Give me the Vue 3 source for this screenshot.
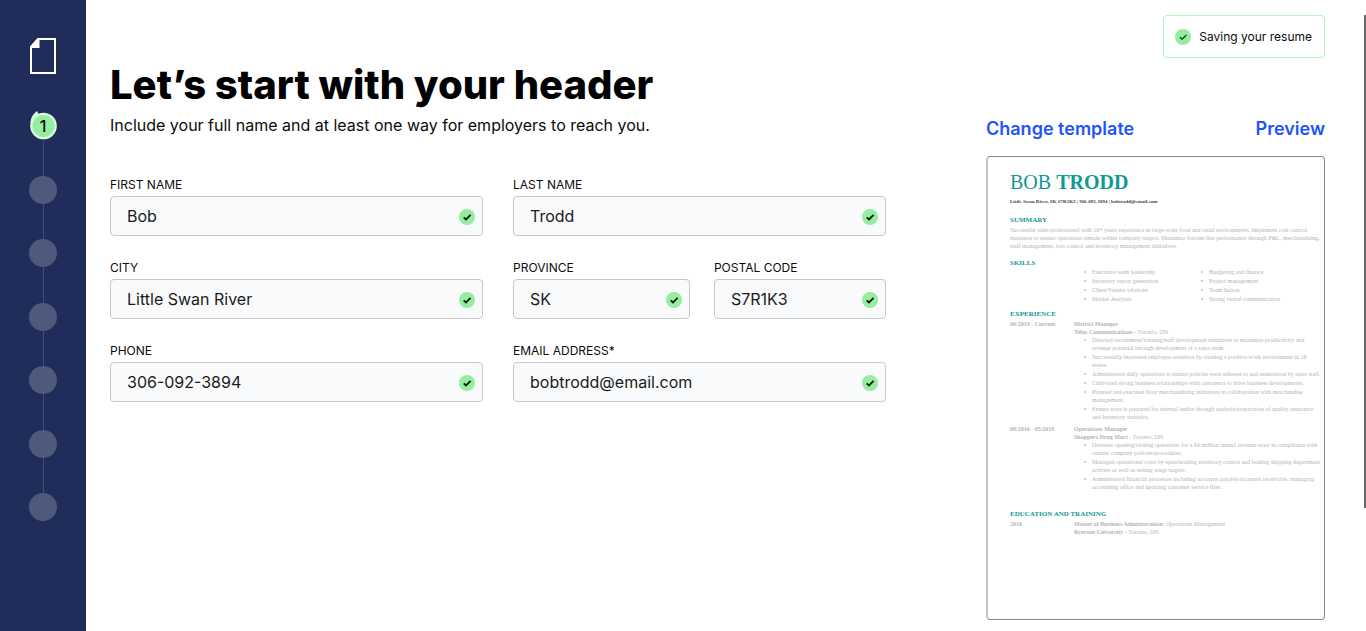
<script setup>
import { reactive } from 'vue'

const fields = reactive([
  { id: 'first-name', label: 'FIRST NAME', value: 'Bob', type: 'text', size: 'half' },
  { id: 'last-name', label: 'LAST NAME', value: 'Trodd', type: 'text', size: 'half' },
  { id: 'city', label: 'CITY', value: 'Little Swan River', type: 'text', size: 'half' },
  { id: 'province', label: 'PROVINCE', value: 'SK', type: 'text', size: 'wide' },
  { id: 'postal-code', label: 'POSTAL CODE', value: 'S7R1K3', type: 'text', size: 'narrow' },
  { id: 'phone', label: 'PHONE', value: '306-092-3894', type: 'tel', size: 'half' },
  { id: 'email', label: 'EMAIL ADDRESS*', value: 'bobtrodd@email.com', type: 'text', size: 'half' },
])

const rows = [
  [fields[0], fields[1]],
  [fields[2], [fields[3], fields[4]]],
  [fields[5], fields[6]],
].map((row) => row.map((cell) => (Array.isArray(cell) ? cell : [cell])))

const summary = [
  'Successful sales professional with 10+ years experience in large-scale food and retail environments. Implement cost control',
  'measures to ensure operations remain within company targets. Maximize bottom-line performance through P&L, merchandising,',
  'staff management, loss control and inventory management initiatives.',
]

const skills = [
  ['Executive team leadership', 'Inventory report generation', 'Client/Vendor relations', 'Market Analysis'],
  ['Budgeting and finance', 'Project management', 'Team liaison', 'Strong verbal communication'],
]

const jobs = [
  {
    dates: '06/2019 - Current',
    title: 'District Manager',
    company: 'Telus Communications',
    items: [
      ['Directed recruitment/training/staff development initiatives to maximize productivity and', 'revenue potential through development of a sales team.'],
      ['Successfully increased employee retention by creating a positive work environment in 18', 'stores.'],
      ['Administered daily operations to ensure policies were adhered to and understood by sales staff.'],
      ['Cultivated strong business relationships with customers to drive business developments.'],
      ['Planned and executed floor merchandising initiatives in collaboration with merchandise', 'management.'],
      ['Ensure store is prepared for internal audits through analysis/preparation of quality assurance', 'and Inventory statistics.'],
    ],
  },
  {
    dates: '08/2016 - 05/2019',
    title: 'Operations Manager',
    company: 'Shoppers Drug Mart',
    items: [
      ['Oversaw opening/closing operations for a $4 million annual revenue store in compliance with', 'current company policies/procedures.'],
      ['Managed operational costs by spearheading inventory control and leading shipping department', 'activies as well as setting wage targets.'],
      ['Administered financial processes including accounts payable/accounts receivable, managing', 'accounting office and updating customer service files.'],
    ],
  },
]
</script>

<template>
  <div class="page">
    <nav class="sidebar" aria-label="Resume steps">
      <svg class="logo" viewBox="0 0 28 38" aria-hidden="true">
        <path d="M9 2H26V36H2V10Z" fill="none" stroke="#fff" stroke-width="2" />
        <path d="M9 1L1 10V11H10.500V1Z" fill="#fff" />
      </svg>
      <ol class="steps">
        <li class="step current" aria-current="step">
          <svg class="ring" viewBox="0 0 28 30" aria-hidden="true">
            <circle cx="14.500" cy="16" r="13.300" fill="#d5fbd9" />
            <path d="M1.500 13C1.500 8 4 4 8 1L10 5L8 10Z" fill="#d5fbd9" />
            <circle cx="14.500" cy="16" r="11" fill="#95eda0" />
            <path d="M6 3L5.500 9L10.500 6Z" fill="#d5fbd9" />
          </svg>
          <span class="number">1</span>
        </li>
        <li v-for="n in 6" :key="n" class="step"></li>
      </ol>
    </nav>

    <main class="content">
      <section class="editor">
        <h1>Let’s start with your header</h1>
        <p class="lead">Include your full name and at least one way for employers to reach you.</p>
        <form class="form" @submit.prevent>
          <div v-for="(row, r) in rows" :key="r" class="row">
            <div v-for="(cell, c) in row" :key="c" class="cell">
              <div v-for="f in cell" :key="f.id" class="field" :class="f.size">
                <label :for="f.id">{{ f.label }}</label>
                <div class="control">
                  <input :id="f.id" v-model="f.value" :type="f.type" />
                  <svg class="check" viewBox="0 0 16 16" aria-hidden="true">
                    <circle cx="8" cy="8" r="8" fill="#95eda0" />
                    <path d="M4.700 8.300L7 10.400L11.600 5.900" fill="none" stroke="#0c1c10" stroke-width="1.800" />
                  </svg>
                </div>
              </div>
            </div>
          </div>
        </form>
      </section>

      <aside class="side">
        <div class="toast" role="status">
          <svg class="check" viewBox="0 0 16 16" aria-hidden="true">
            <circle cx="8" cy="8" r="8" fill="#95eda0" />
            <path d="M4.800 8.100L7 10.200L11.400 6" fill="none" stroke="#24452a" stroke-width="1.400" />
          </svg>
          <span>Saving your resume</span>
        </div>
        <div class="links">
          <a href="#template">Change template</a>
          <a href="#preview">Preview</a>
        </div>

        <article class="resume">
          <h2 class="name">BOB <b>TRODD</b></h2>
          <p class="contact">Little Swan River, SK S7R1K3 | 306-092-3894 | bobtrodd@email.com</p>
          <h3 class="summary-title">SUMMARY</h3>
          <p class="summary"><span v-for="line in summary" :key="line" class="line">{{ line }}</span></p>
          <h3 class="skills-title">SKILLS</h3>
          <div class="skills">
            <ul v-for="(col, i) in skills" :key="i">
              <li v-for="s in col" :key="s">{{ s }}</li>
            </ul>
          </div>
          <h3 class="experience-title">EXPERIENCE</h3>
          <div v-for="job in jobs" :key="job.title" class="entry">
            <b>{{ job.dates }}</b>
            <div>
              <p><b>{{ job.title }}</b></p>
              <p><b>{{ job.company }} -</b> Toronto, ON</p>
              <ul>
                <li v-for="(item, i) in job.items" :key="i">
                  <span v-for="line in item" :key="line" class="line">{{ line }}</span>
                </li>
              </ul>
            </div>
          </div>
          <h3 class="education-title">EDUCATION AND TRAINING</h3>
          <div class="entry">
            <b>2016</b>
            <div>
              <p><b>Master of Business Administration</b>: Operations Management</p>
              <p><b>Ryerson University -</b> Toronto, ON</p>
            </div>
          </div>
        </article>
      </aside>
    </main>
    <div class="scroll-thumb" aria-hidden="true"></div>
  </div>
</template>

<style>
body {
  margin: 0;
  background: #fff;
}
</style>

<style scoped>
.page {
  position: relative;
  display: flex;
  min-height: 100vh;
  font-family: Inter, "Liberation Sans", sans-serif;
  color: #0b0b0b;
}
.page *,
.page *::before {
  box-sizing: border-box;
}
h1, h2, h3, p, ul, ol {
  margin: 0;
  padding: 0;
}
.sidebar {
  display: flex;
  flex: none;
  flex-direction: column;
  align-items: center;
  width: 86px;
  padding-top: 37px;
  background: #202c59;
}
.logo {
  width: 28px;
  height: 38px;
}
.steps {
  position: relative;
  display: flex;
  flex-direction: column;
  justify-content: space-between;
  height: 409px;
  margin-top: 37px;
  list-style: none;
}
.steps::before {
  content: "";
  position: absolute;
  top: 28px;
  bottom: 14px;
  left: 14px;
  width: 1px;
  background: #414c75;
}
.step {
  position: relative;
  width: 28px;
  height: 28px;
  border-radius: 50%;
  background: #4f597b;
}
.current {
  display: grid;
  place-items: center;
  background: none;
}
.ring {
  position: absolute;
  bottom: 0;
  left: 0;
  width: 28px;
  height: 30px;
}
.number {
  position: relative;
  font-size: 16px;
  font-weight: 500;
  line-height: 28px;
}
.content {
  display: grid;
  flex: 1;
  grid-template-columns: minmax(0, 1fr) 339px;
  gap: 100px;
  padding: 0 41px 11px 24px;
}
.editor {
  padding-top: 62px;
}
h1 {
  font-size: 40px;
  font-weight: 800;
  line-height: 46px;
  color: #000;
  white-space: nowrap;
}
.lead {
  margin-top: 6px;
  font-size: 16px;
  line-height: 22px;
}
.form {
  display: grid;
  gap: 24px;
  margin-top: 41px;
}
.row {
  display: grid;
  grid-template-columns: 1fr 1fr;
  gap: 30px;
}
.cell {
  display: flex;
  gap: 24px;
}
.field {
  flex: 1;
  min-width: 0;
}
.field.wide {
  flex-grow: 36;
}
.field.narrow {
  flex-grow: 35;
}
label {
  display: block;
  margin-bottom: 3px;
  font-size: 12px;
  line-height: 16px;
}
.control {
  position: relative;
}
input {
  display: block;
  width: 100%;
  height: 40px;
  padding: 0 40px 0 16px;
  border: 1px solid #c6c8ca;
  border-radius: 4px;
  outline: none;
  background: #f9fafc;
  font: inherit;
  font-size: 16px;
  color: #1a1a1a;
}
.check {
  flex: none;
  width: 16px;
  height: 16px;
}
.control .check {
  position: absolute;
  top: 13px;
  right: 8px;
}
.side {
  display: flex;
  flex-direction: column;
  padding-top: 15px;
}
.toast {
  display: flex;
  align-items: center;
  align-self: flex-end;
  gap: 8px;
  height: 43px;
  padding: 0 12px 0 11px;
  border: 1px solid #b6f2bd;
  border-radius: 4px;
  font-size: 12px;
}
.links {
  display: flex;
  justify-content: space-between;
  margin-top: 59px;
}
.links a {
  font-size: 18px;
  font-weight: 600;
  line-height: 24px;
  color: #1f55f5;
  text-decoration: none;
}
.resume {
  min-height: 464px;
  margin-top: 15px;
  padding: 14px 16px 16px 22px;
  border: 1px solid #8a8c8c;
  border-left: 2px solid #c6c6c6;
  border-radius: 4px;
  font-family: "Liberation Serif", serif;
  font-size: 6px;
  line-height: 8px;
  color: #b4b4b4;
  white-space: nowrap;
}
.name {
  font-size: 20px;
  font-weight: 400;
  line-height: 22px;
  color: #109894;
}
.contact {
  margin-top: 5px;
  font-size: 5px;
  font-weight: 700;
  color: #444;
}
h3 {
  font-size: 7px;
  line-height: 8px;
  color: #109894;
}
.summary-title {
  margin-top: 10px;
}
.summary {
  margin-top: 2px;
}
.skills-title {
  margin-top: 9px;
}
.experience-title {
  margin-top: 7px;
}
.education-title {
  margin-top: 19px;
}
.line {
  display: block;
}
.resume ul {
  display: grid;
  gap: 1px;
  list-style: none;
}
.resume li {
  position: relative;
  padding-left: 8px;
}
.resume li::before {
  content: "";
  position: absolute;
  top: 3px;
  left: 0;
  width: 2px;
  height: 2px;
  border-radius: 50%;
  background: #bcbcbc;
}
.skills {
  display: grid;
  grid-template-columns: 117px 1fr;
  margin-top: 1px;
  padding-left: 74px;
}
.entry {
  display: grid;
  grid-template-columns: 64px 1fr;
  margin-top: 2px;
}
.entry + .entry {
  margin-top: 4px;
}
.entry ul {
  padding-left: 10px;
}
.scroll-thumb {
  position: absolute;
  top: 15px;
  right: 0;
  width: 2px;
  height: 493px;
  background: #686868;
}
</style>
